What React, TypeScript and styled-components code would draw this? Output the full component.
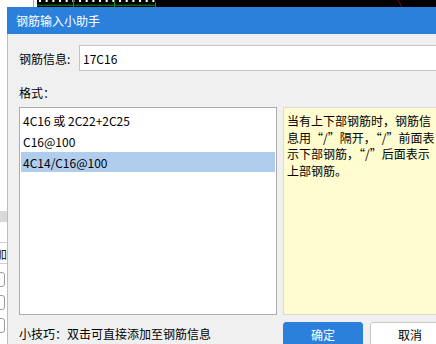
import React from 'react';
import styled, { createGlobalStyle } from 'styled-components';

const GlobalStyle = createGlobalStyle`
  html, body {
    margin: 0;
    padding: 0;
    overflow: hidden;
    background: #ffffff;
  }
  body {
    font-family: "Noto Sans CJK SC", "Liberation Sans", sans-serif;
    font-size: 12px;
    color: #000;
  }
`;

const formats = ['4C16 或 2C22+2C25', 'C16@100', '4C14/C16@100'];
const selectedIndex = 2;

const hintLines = [
  '当有上下部钢筋时，钢筋信',
  '息用“/”隔开，“/”前面表',
  '示下部钢筋，“/”后面表示',
  '上部钢筋。',
];

// background app: only slivers of it show around the dialog
const CanvasGrid = () => {
  const dots: number[] = [];
  for (let x = 2; x < 118; x += 6.67) dots.push(x);
  return (
    <svg width="100%" height="100%" viewBox="0 0 399 344" preserveAspectRatio="xMinYMin slice">
      {dots.map((x, i) => (
        <rect key={i} x={x} y={0} width={2} height={2} fill="#ffffff" />
      ))}
      <line x1={0} y1={5.2} x2={118} y2={5.2} stroke="#1c8c1c" strokeWidth={1} />
      <line x1={36.5} y1={0} x2={36.5} y2={7} stroke="#1c8c1c" strokeWidth={1} />
      <line x1={77.5} y1={0} x2={77.5} y2={7} stroke="#1c8c1c" strokeWidth={1} />
      <line x1={118.5} y1={2} x2={118.5} y2={7} stroke="#1c8c1c" strokeWidth={1} />
      <line x1={361} y1={0} x2={365} y2={7} stroke="#7a0a0a" strokeWidth={1} />
    </svg>
  );
};

const App: React.FC = () => {
  return (
    <>
      <GlobalStyle />
      <Screen>
        <SidePanel>
          <PanelBand />
          <PanelRow>
            <PanelLabel>添加</PanelLabel>
          </PanelRow>
          <PanelField />
          <PanelField />
          <PanelField />
        </SidePanel>
        <Canvas>
          <CanvasGrid />
        </Canvas>

        <Dialog>
          <TitleBar>钢筋输入小助手</TitleBar>
          <DialogBody>
            <InfoRow>
              <FieldLabel>钢筋信息:</FieldLabel>
              <InfoInput defaultValue="17C16" />
            </InfoRow>
            <SectionLabel>格式：</SectionLabel>
            <PanelsRow>
              <FormatList>
                {formats.map((f, i) => (
                  <FormatItem key={f} selected={i === selectedIndex}>
                    {f}
                  </FormatItem>
                ))}
              </FormatList>
              <HintBox>
                {hintLines.map((line) => (
                  <HintLine key={line}>{line}</HintLine>
                ))}
              </HintBox>
            </PanelsRow>
            <Footer>
              <TipText>小技巧：双击可直接添加至钢筋信息</TipText>
              <ButtonGroup>
                <DialogButton primary>确定</DialogButton>
                <DialogButton>取消</DialogButton>
              </ButtonGroup>
            </Footer>
          </DialogBody>
        </Dialog>
      </Screen>
    </>
  );
};

export default App;

const Screen = styled.div`
  position: relative;
  width: 436px;
  height: 344px;
  display: flex;
  overflow: hidden;
  background: #ffffff;
`;

const SidePanel = styled.div`
  width: 33px;
  flex-shrink: 0;
  display: flex;
  flex-direction: column;
  padding-top: 211px;
  border-right: 1px solid #a9a9a9;
  background: #ffffff;
  overflow: hidden;
`;

const PanelBand = styled.div`
  height: 11px;
  background: #d9d9d9;
`;

const PanelRow = styled.div`
  margin-top: 20px;
  height: 20px;
  border-top: 1px solid #cfcfcf;
  border-bottom: 1px solid #cfcfcf;
  display: flex;
  align-items: center;
  background: #ffffff;
`;

const PanelLabel = styled.span`
  margin-left: -17px;
  font-size: 12px;
  color: #222;
  white-space: nowrap;
`;

const PanelField = styled.div`
  margin-top: 8px;
  margin-left: -20px;
  width: 23px;
  height: 13px;
  border: 1px solid #9c9c9c;
  border-radius: 3px;
  background: #ffffff;
`;

const Canvas = styled.div`
  flex: 1;
  margin-left: 3px;
  background: #000000;
  overflow: hidden;
`;

const Dialog = styled.div`
  position: absolute;
  left: 7px;
  top: 7px;
  width: 460px;
  height: 345px;
  display: flex;
  flex-direction: column;
  background: #f0f0f0;
`;

const TitleBar = styled.div`
  height: 27px;
  flex-shrink: 0;
  display: flex;
  align-items: center;
  padding-left: 9px;
  background: #2b80dc;
  color: #ffffff;
  font-size: 12px;
`;

const DialogBody = styled.div`
  flex: 1;
  display: flex;
  flex-direction: column;
  padding: 11px 0 0 11px;
  border-left: 1px solid #bdbdbd;
`;

const InfoRow = styled.div`
  display: flex;
  align-items: center;
  height: 26px;
`;

const FieldLabel = styled.span`
  width: 60px;
  flex-shrink: 0;
  white-space: nowrap;
`;

const InfoInput = styled.input`
  flex: 1;
  height: 26px;
  box-sizing: border-box;
  border: 1px solid #c4c4c4;
  background: #ffffff;
  padding: 0 0 0 3px;
  font-family: inherit;
  font-size: 12px;
  color: #000;
  outline: none;
`;

const SectionLabel = styled.div`
  margin-top: 14px;
  line-height: 16px;
`;

const PanelsRow = styled.div`
  margin-top: 6px;
  height: 208px;
  display: flex;
  gap: 6px;
`;

const FormatList = styled.div`
  width: 258px;
  flex-shrink: 0;
  box-sizing: border-box;
  border: 1px solid #acacac;
  background: #ffffff;
  padding: 2px 1px;
`;

const FormatItem = styled.div<{ selected?: boolean }>`
  height: 20px;
  margin-bottom: 1px;
  display: flex;
  align-items: center;
  padding-left: 2px;
  white-space: nowrap;
  background: ${({ selected }) => (selected ? '#b0cdee' : 'transparent')};
`;

const HintBox = styled.div`
  flex: 1;
  box-sizing: border-box;
  border: 1px solid #dadada;
  background: #fffdd0;
  padding: 5px 0 0 3px;
`;

const HintLine = styled.div`
  line-height: 16.5px;
  white-space: nowrap;
`;

const Footer = styled.div`
  display: flex;
  align-items: flex-start;
  margin-top: 7px;
`;

const TipText = styled.div`
  width: 264px;
  flex-shrink: 0;
  margin-top: 4px;
  line-height: 16px;
  white-space: nowrap;
`;

const ButtonGroup = styled.div`
  display: flex;
  gap: 7px;
`;

const DialogButton = styled.button<{ primary?: boolean }>`
  width: 80px;
  height: 24px;
  box-sizing: border-box;
  border-radius: 3px;
  font-family: inherit;
  font-size: 12px;
  padding: 0;
  cursor: pointer;
  border: 1px solid ${({ primary }) => (primary ? '#2b80dc' : '#c8c8c8')};
  background: ${({ primary }) => (primary ? '#2b80dc' : '#ffffff')};
  color: ${({ primary }) => (primary ? '#ffffff' : '#000000')};
`;
